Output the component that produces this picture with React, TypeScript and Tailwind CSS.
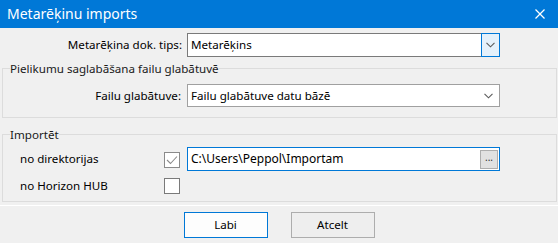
import React from "react";

function Chevron() {
  return (
    <svg width="9" height="6" viewBox="0 0 9 6" fill="none">
      <polyline points="0.5,0.8 4.5,4.8 8.5,0.8" stroke="#5a5a5a" strokeWidth="1.1" />
    </svg>
  );
}

export default function App() {
  return (
    <div className="w-[558px] h-[243px] bg-[#f0f0f0] flex flex-col overflow-hidden text-[11.6px] text-black font-['Noto_Sans',sans-serif] leading-[16px]">
      {/* Title bar */}
      <div className="h-[28px] bg-[#0078d7] flex items-center justify-between pl-[7px] pr-[13px] text-white text-[14px] shrink-0">
        <span>Metarēķinu imports</span>
        <svg width="10" height="10" viewBox="0 0 10 10" fill="none">
          <line x1="0.5" y1="0.5" x2="9.5" y2="9.5" stroke="#fff" strokeWidth="1.3" />
          <line x1="9.5" y1="0.5" x2="0.5" y2="9.5" stroke="#fff" strokeWidth="1.3" />
        </svg>
      </div>

      {/* Row 1 */}
      <div className="mt-[5px] h-[24px] flex items-center shrink-0">
        <div className="w-[182px] text-right">Metarēķina dok. tips:</div>
        <div className="ml-[5px] w-[313px] h-[24px] flex">
          <div className="flex-1 h-full bg-white border border-[#7a7a7a] border-r-0 flex items-center pl-[3px]">
            Metarēķins
          </div>
          <div className="w-[19px] h-full bg-[#e5f1fb] border border-[#0078d7] flex items-center justify-center">
            <Chevron />
          </div>
        </div>
      </div>

      {/* Group 1 */}
      <fieldset className="mt-[4px] ml-[2px] w-[555px] border border-[#dcdcdc] shrink-0 pb-[10px]">
        <legend className="ml-[7px] h-[15px] leading-[15px] text-[#1a1a1a]">Pielikumu saglabāšana failu glabātuvē</legend>
        <div className="mt-[8px] h-[23px] flex items-center">
          <div className="w-[178px] text-right">Failu glabātuve:</div>
          <div className="ml-[6px] w-[313px] h-[23px] bg-white border border-[#a0a0a0] flex items-center justify-between pl-[3px] pr-[6px]">
            <span>Failu glabātuve datu bāzē</span>
            <Chevron />
          </div>
        </div>
      </fieldset>

      {/* Group 2 */}
      <fieldset className="mt-[9px] ml-[2px] w-[555px] border border-[#dcdcdc] shrink-0 pb-[7px]">
        <legend className="ml-[7px] h-[15px] leading-[15px] text-[#1a1a1a]">Importēt</legend>
        <div className="mt-[5px] h-[24px] flex items-center">
          <div className="w-[161px] pl-[17px]">no direktorijas</div>
          <div className="w-[16px] h-[16px] bg-white border border-[#8a8a8a] flex items-center justify-center mt-[2px]">
            <svg width="12" height="10" viewBox="0 0 12 10" fill="none">
              <polyline points="1,5 4.5,8.5 11,1.5" stroke="#8a8a8a" strokeWidth="1.1" />
            </svg>
          </div>
          <div className="ml-[7px] w-[313px] h-[24px] bg-white border border-[#0078d7] flex items-center justify-between pl-[3px] pr-[1px]">
            <span className="text-[12px]">C:\Users\Peppol\Importam</span>
            <div className="w-[18px] h-[19px] bg-[#e1e1e1] border border-[#adadad] flex items-center justify-center text-[10px] leading-[10px] text-[#333] pb-[4px]">
              ...
            </div>
          </div>
        </div>
        <div className="mt-[7px] h-[16px] flex items-center">
          <div className="w-[161px] pl-[17px]">no Horizon HUB</div>
          <div className="w-[16px] h-[16px] bg-white border border-[#7a7a7a]" />
        </div>
      </fieldset>

      <div className="mt-[3px] h-[1px] bg-white shrink-0" />

      {/* Buttons */}
      <div className="mt-[6px] flex justify-center gap-[23px] shrink-0">
        <button className="w-[84px] h-[26px] bg-[#fdfdfd] border border-[#0078d7] flex items-center justify-center">Labi</button>
        <button className="w-[84px] h-[26px] bg-[#eeeeee] border border-[#adadad] flex items-center justify-center">Atcelt</button>
      </div>
    </div>
  );
}
